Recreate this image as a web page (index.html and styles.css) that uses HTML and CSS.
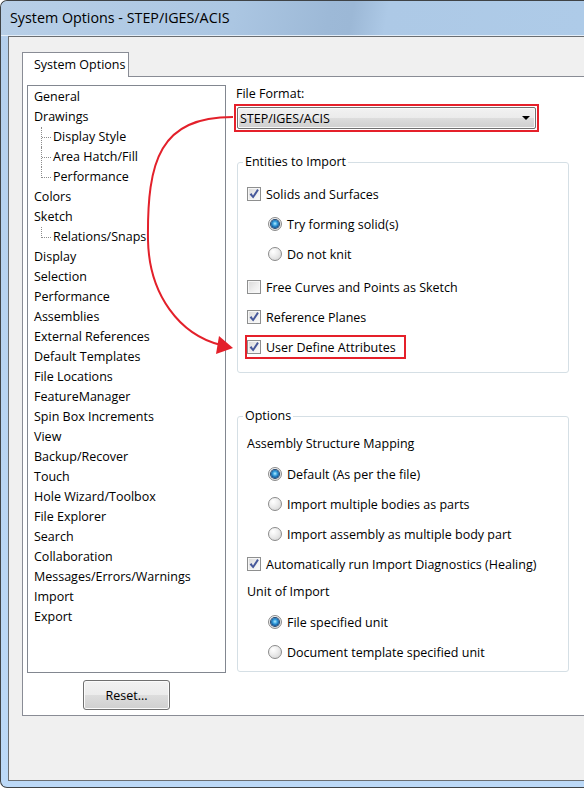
FILE: index.html
```html
<!DOCTYPE html>
<html lang="en">
<head>
<meta charset="utf-8">
<title>System Options - STEP/IGES/ACIS</title>
<link rel="stylesheet" href="styles.css">
</head>
<body>
<div class="window">
  <div class="titlebar">System Options - STEP/IGES/ACIS</div>
  <div class="client">
    <div class="tabs"><div class="tab">System Options</div></div>
    <div class="panel">
      <div class="left-col">
        <ul class="tree">
          <li>General</li>
          <li>Drawings</li>
          <li class="child">Display Style</li>
          <li class="child">Area Hatch/Fill</li>
          <li class="child last">Performance</li>
          <li>Colors</li>
          <li>Sketch</li>
          <li class="child last">Relations/Snaps</li>
          <li>Display</li>
          <li>Selection</li>
          <li>Performance</li>
          <li>Assemblies</li>
          <li>External References</li>
          <li>Default Templates</li>
          <li>File Locations</li>
          <li>FeatureManager</li>
          <li>Spin Box Increments</li>
          <li>View</li>
          <li>Backup/Recover</li>
          <li>Touch</li>
          <li>Hole Wizard/Toolbox</li>
          <li>File Explorer</li>
          <li>Search</li>
          <li>Collaboration</li>
          <li>Messages/Errors/Warnings</li>
          <li>Import</li>
          <li>Export</li>
        </ul>
        <button class="btn" type="button">Reset...</button>
      </div>
      <div class="right-col">
        <div class="ff-label">File Format:</div>
        <div class="red-box">
          <div class="combo"><span>STEP/IGES/ACIS</span><span class="caret"></span></div>
        </div>

        <fieldset class="group entities">
          <legend>Entities to Import</legend>
          <div class="row"><span class="cb on"><svg viewBox="0 0 12 12"><path d="M1.6 6.4 L3.4 5 L5 7.4 L9.2 1 L10.8 2.2 L5.2 10.6 Z"/></svg></span>Solids and Surfaces</div>
          <div class="row sub"><span class="rb on"></span>Try forming solid(s)</div>
          <div class="row sub"><span class="rb"></span>Do not knit</div>
          <div class="row gap"><span class="cb"></span>Free Curves and Points as Sketch</div>
          <div class="row"><span class="cb on"><svg viewBox="0 0 12 12"><path d="M1.6 6.4 L3.4 5 L5 7.4 L9.2 1 L10.8 2.2 L5.2 10.6 Z"/></svg></span>Reference Planes</div>
          <div class="row"><span class="mark"><span class="cb on"><svg viewBox="0 0 12 12"><path d="M1.6 6.4 L3.4 5 L5 7.4 L9.2 1 L10.8 2.2 L5.2 10.6 Z"/></svg></span>User Define Attributes</span></div>
        </fieldset>

        <fieldset class="group options">
          <legend>Options</legend>
          <div class="row label first">Assembly Structure Mapping</div>
          <div class="row sub"><span class="rb on"></span>Default (As per the file)</div>
          <div class="row sub"><span class="rb"></span>Import multiple bodies as parts</div>
          <div class="row sub"><span class="rb"></span>Import assembly as multiple body part</div>
          <div class="row"><span class="cb on"><svg viewBox="0 0 12 12"><path d="M1.6 6.4 L3.4 5 L5 7.4 L9.2 1 L10.8 2.2 L5.2 10.6 Z"/></svg></span>Automatically run Import Diagnostics (Healing)</div>
          <div class="row label unit">Unit of Import</div>
          <div class="row sub"><span class="rb on"></span>File specified unit</div>
          <div class="row sub"><span class="rb"></span>Document template specified unit</div>
        </fieldset>
      </div>
    </div>
  </div>
</div>
<svg class="arrow" width="584" height="789" viewBox="0 0 584 789">
  <path d="M233 117 C160 117 147 160 148 240 C149 295 180 335 221 345" fill="none" stroke="#e3202a" stroke-width="2"/>
  <polygon points="233,348 219,336 216,354" fill="#e3202a"/>
</svg>
</body>
</html>
```
FILE: styles.css
```css
* { box-sizing: border-box; }
html, body { margin: 0; padding: 0; }
body {
  width: 584px;
  height: 789px;
  overflow: hidden;
  position: relative;
  background: #ffffff;
  font-family: "Open Sans", "Noto Sans", sans-serif;
  font-size: 12.5px;
  color: #000;
}

.window {
  height: 788px;
  border: 1px solid #3f4346;
  border-right: none;
  border-radius: 7px 0 0 7px;
  background: linear-gradient(#b4cfec, #bcd9f7);
  padding: 0 0 6px 7px;
  display: flex;
  flex-direction: column;
  overflow: hidden;
}

.titlebar {
  flex: none;
  height: 35px;
  margin-left: -7px;
  padding: 0 0 2px 9px;
  display: flex;
  align-items: center;
  font-size: 14.3px;
  color: #000;
  background: linear-gradient(100deg, #b8cfe7 0%, #abc6e2 40%, #9db9d7 56%, #9cb8d6 60%, #adc9e6 66%, #aecbe8 100%);
  border-bottom: 1px solid #e4eef8;
  border-radius: 6px 0 0 0;
}

.client {
  flex: none;
  height: 745px;
  border: 1px solid #6a6e72;
  border-right: none;
  background: #f0f0f0;
  padding: 15px 0 0 13px;
}

.tabs { display: flex; height: 24px; }
.tab {
  height: 25px;
  width: 107px;
  border: 1px solid #898c95;
  border-bottom: none;
  background: #fff;
  padding-left: 11px;
  line-height: 23px;
  white-space: nowrap;
  position: relative;
  z-index: 1;
}

.panel {
  height: 640px;
  margin-right: -40px;
  border: 1px solid #898c95;
  background: #fff;
  display: flex;
  gap: 8px;
  padding: 8px 0 5px 4px;
}

.left-col {
  width: 199px;
  display: flex;
  flex-direction: column;
  align-items: center;
  gap: 7px;
}

.tree {
  list-style: none;
  margin: 0;
  width: 199px;
  height: 588px;
  border: 1px solid #828790;
  padding: 1px 0 0 6px;
}
.tree li {
  height: 20px;
  line-height: 20px;
  white-space: nowrap;
}
.tree li.child {
  position: relative;
  padding-left: 19px;
}
.tree li.child::before {
  content: "";
  position: absolute;
  left: 7px;
  top: 0;
  height: 20px;
  border-left: 1px dotted #8e8e8e;
}
.tree li.child.last::before { height: 11px; }
.tree li.child::after {
  content: "";
  position: absolute;
  left: 8px;
  top: 10px;
  width: 9px;
  border-top: 1px dotted #8e8e8e;
}

.btn {
  width: 87px;
  height: 30px;
  border: 1px solid #707070;
  border-radius: 3px;
  background: linear-gradient(#f2f2f2 0%, #ebebeb 50%, #dddddd 50%, #cfcfcf 100%);
  box-shadow: inset 0 0 0 1px #fbfbfb;
  font-family: inherit;
  font-size: 12.5px;
  color: #000;
  padding: 0;
}

.right-col {
  width: 340px;
  display: flex;
  flex-direction: column;
}

.ff-label {
  margin-top: 1px;
  padding-left: 2px;
  line-height: 16px;
}

.red-box {
  margin-top: 2px;
  width: 305px;
  height: 28px;
  border: 2px solid #e5202a;
  padding: 1px;
}
.combo {
  height: 22px;
  border: 1px solid #707070;
  border-radius: 2px;
  background: linear-gradient(#f2f2f2 0%, #ebebeb 50%, #dddddd 50%, #cfcfcf 100%);
  box-shadow: inset 0 0 0 1px #fafafa;
  display: flex;
  align-items: center;
  justify-content: space-between;
  padding: 0 5px 0 2px;
}
.caret {
  width: 0;
  height: 0;
  border-left: 4px solid transparent;
  border-right: 4px solid transparent;
  border-top: 4px solid #000;
}

.group {
  margin: 0 0 0 3px;
  width: 332px;
  border: 1px solid #d5dfe5;
  border-radius: 3px;
  padding: 9px 0 10px 9px;
  min-width: 0;
}
.group legend {
  padding: 0 2px;
  margin-left: -4px;
  line-height: 16px;
}
.entities { margin-top: 22px; }
.options { margin-top: 35px; padding-top: 4px; padding-bottom: 4px; }

.row {
  display: flex;
  align-items: center;
  height: 30px;
  white-space: nowrap;
}
.row.sub { padding-left: 21px; }
.row.gap { margin-top: 3px; }
.row.label.first { height: 31px; }
.row.label.unit { height: 28px; padding-bottom: 4px; }

.mark {
  display: inline-flex;
  align-items: center;
  height: 24px;
  margin-left: -2px;
  border: 2px solid #e5202a;
  padding-right: 8px;
}

.cb {
  flex: none;
  width: 14px;
  height: 14px;
  margin-right: 5px;
  border: 1px solid #8e8f8f;
  background: linear-gradient(135deg, #d8d8d8 0%, #eeeeee 55%, #fbfbfb 100%);
  box-shadow: inset 0 0 0 1px #f6f6f6;
  display: flex;
  align-items: center;
  justify-content: center;
}
.cb svg { width: 12px; height: 12px; }
.cb svg path { fill: #45579a; }

.rb {
  flex: none;
  width: 14px;
  height: 14px;
  margin-right: 5px;
  border-radius: 50%;
  border: 1px solid #8b8b8b;
  background: radial-gradient(circle at 35% 30%, #ffffff 0%, #ececec 45%, #cfcfcf 100%);
  display: flex;
  align-items: center;
  justify-content: center;
}
.rb.on::after {
  content: "";
  width: 8px;
  height: 8px;
  border-radius: 50%;
  background: radial-gradient(circle at 50% 45%, #b6ecff 0%, #3aa3e0 35%, #0d5497 70%, #0b3563 100%);
  box-shadow: 0 0 0 1px #24476f;
}

.arrow {
  position: absolute;
  left: 0;
  top: 0;
  pointer-events: none;
  z-index: 10;
}
```
